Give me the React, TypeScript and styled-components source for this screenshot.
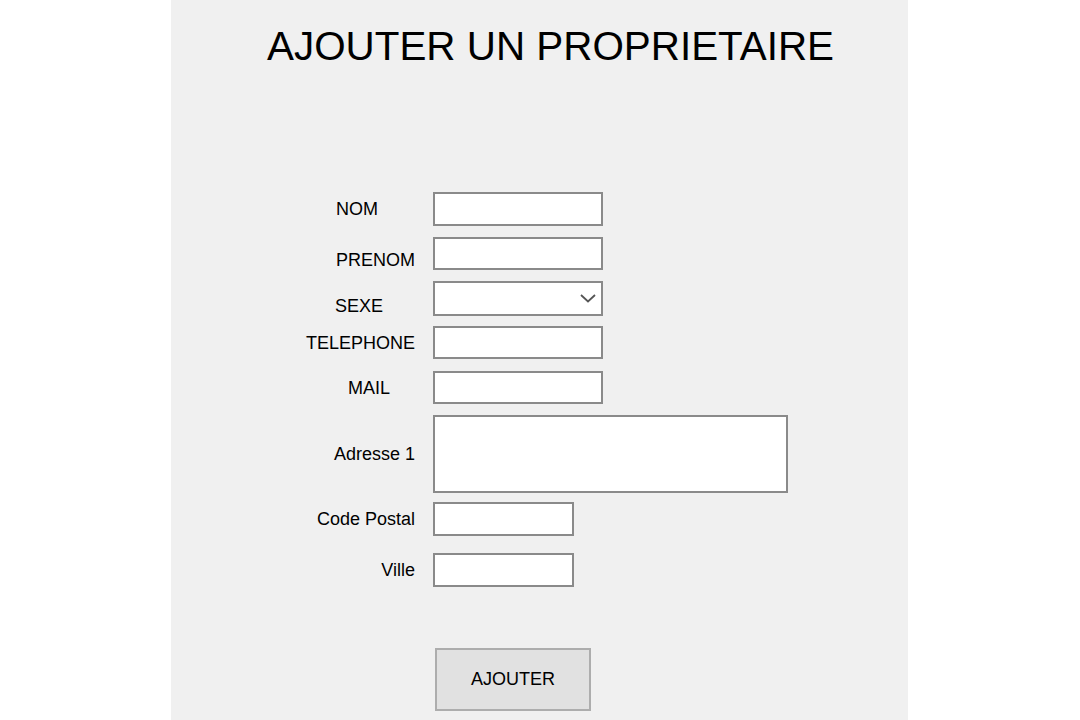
import React from "react";
import styled, { createGlobalStyle } from "styled-components";

const GlobalStyle = createGlobalStyle`
  html, body {
    margin: 0;
    padding: 0;
    background: #ffffff;
    font-family: "Liberation Sans", Arial, sans-serif;
  }
`;

const Page = styled.div`
  width: 1080px;
  height: 720px;
  overflow: hidden;
  background: #ffffff;
`;

const Panel = styled.div`
  margin-left: 171px;
  width: 737px;
  height: 720px;
  background: #f0f0f0;
  box-sizing: border-box;
  padding-top: 23px;
`;

const Title = styled.h1`
  margin: 0;
  padding-left: 96px;
  font-size: 40.4px;
  line-height: 46px;
  font-weight: normal;
  color: #000;
  white-space: nowrap;
`;

const Form = styled.div`
  margin-top: 123px;
  display: flex;
  flex-direction: column;
`;

const Row = styled.div<{ $gap: number }>`
  display: flex;
  align-items: center;
  margin-top: ${(p) => p.$gap}px;
`;

const Label = styled.label<{ $inset?: number; $shift?: number }>`
  width: 262px;
  box-sizing: border-box;
  text-align: right;
  padding-right: ${(p) => 18 + (p.$inset || 0)}px;
  padding-top: ${(p) => (p.$shift || 0) * 2}px;
  font-size: 18px;
  line-height: 20px;
  color: #000;
  white-space: nowrap;
`;

const Field = styled.div<{ $w: number; $h: number }>`
  width: ${(p) => p.$w}px;
  height: ${(p) => p.$h}px;
  box-sizing: border-box;
  border: 2px solid #8a8a8a;
  background: #ffffff;
`;

const Select = styled(Field)`
  display: flex;
  align-items: center;
  justify-content: flex-end;
  padding-right: 5px;
`;

const ButtonRow = styled.div`
  margin-top: 61px;
  padding-left: 264px;
`;

const Button = styled.button`
  width: 156px;
  height: 63px;
  box-sizing: border-box;
  background: #e1e1e1;
  border: 2px solid #adadad;
  font-family: "Liberation Sans", Arial, sans-serif;
  font-size: 18px;
  color: #000;
  padding: 0;
`;

type Item = {
  label: string;
  gap: number;
  w: number;
  h: number;
  inset?: number;
  shift?: number;
  select?: boolean;
};

const items: Item[] = [
  { label: "NOM", gap: 0, w: 170, h: 34, inset: 37 },
  { label: "PRENOM", gap: 11, w: 170, h: 33, shift: 6 },
  { label: "SEXE", gap: 11, w: 170, h: 35, inset: 32, shift: 7, select: true },
  { label: "TELEPHONE", gap: 10, w: 170, h: 33 },
  { label: "MAIL", gap: 12, w: 170, h: 33, inset: 25 },
  { label: "Adresse 1", gap: 11, w: 355, h: 78 },
  { label: "Code Postal", gap: 9, w: 141, h: 34 },
  { label: "Ville", gap: 17, w: 141, h: 34 },
];

const Chevron = () => (
  <svg width="16" height="9" viewBox="0 0 16 9">
    <polyline points="1,1 8,7.5 15,1" fill="none" stroke="#555" strokeWidth="1.8" />
  </svg>
);

export default function App() {
  return (
    <Page>
      <GlobalStyle />
      <Panel>
        <Title>AJOUTER UN PROPRIETAIRE</Title>
        <Form>
          {items.map((it) => (
            <Row key={it.label} $gap={it.gap}>
              <Label $inset={it.inset} $shift={it.shift}>
                {it.label}
              </Label>
              {it.select ? (
                <Select $w={it.w} $h={it.h}>
                  <Chevron />
                </Select>
              ) : (
                <Field $w={it.w} $h={it.h} />
              )}
            </Row>
          ))}
          <ButtonRow>
            <Button>AJOUTER</Button>
          </ButtonRow>
        </Form>
      </Panel>
    </Page>
  );
}
